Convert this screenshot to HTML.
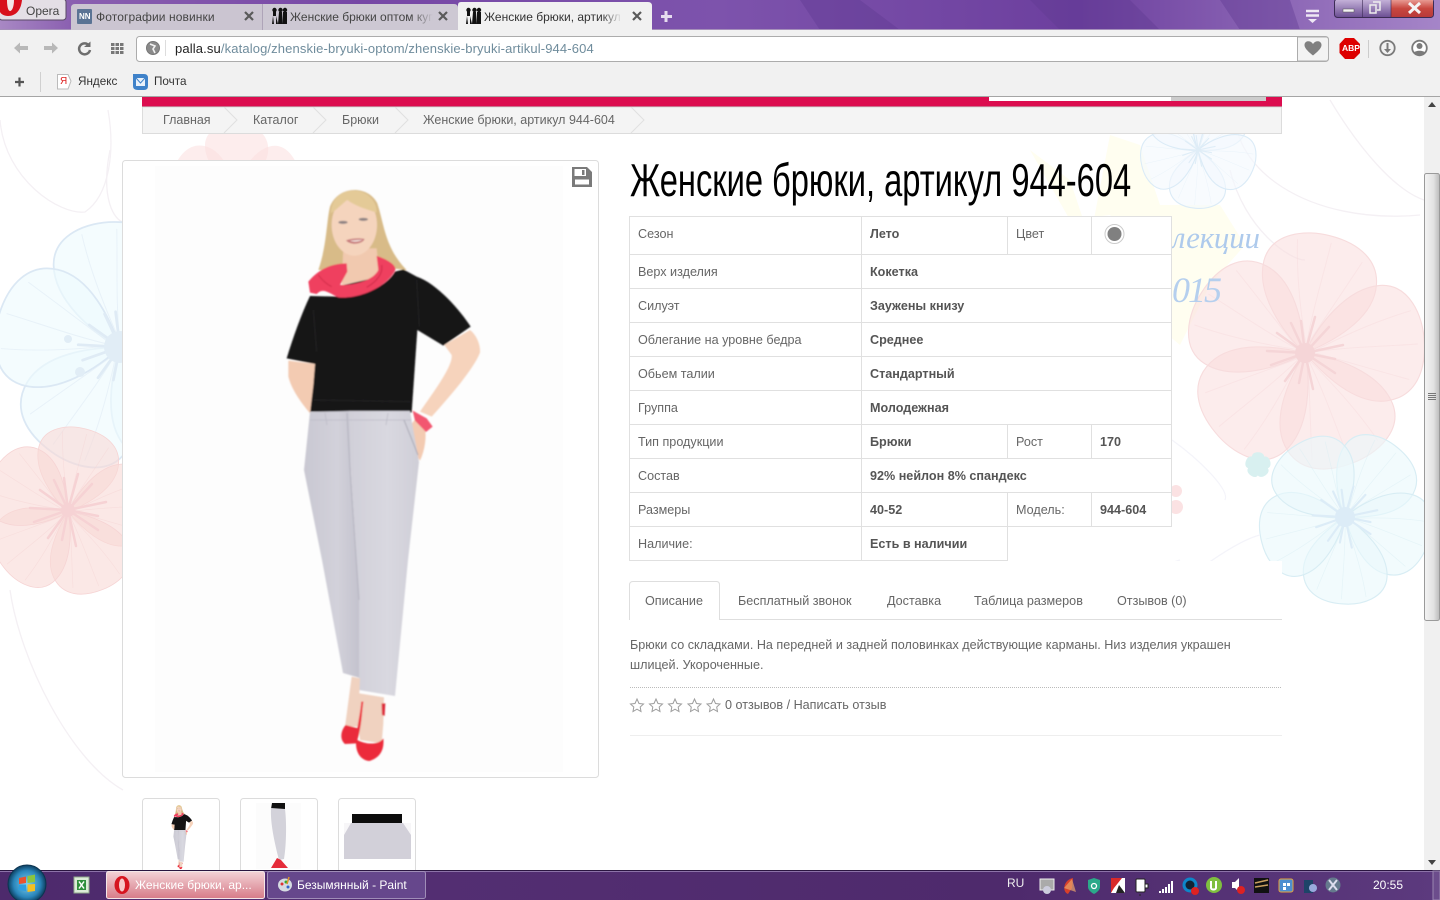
<!DOCTYPE html>
<html lang="ru"><head><meta charset="utf-8"><title>Женские брюки, артикул 944-604</title>
<style>
html,body{margin:0;padding:0;width:1440px;height:900px;overflow:hidden;background:#fff;font-family:"Liberation Sans","Noto Sans CJK SC",sans-serif;}
.t{position:absolute;white-space:nowrap;line-height:16px;font-size:12.6px;color:#666}
.b{font-weight:bold;color:#555;font-size:12.6px}
svg{position:absolute;left:0;top:0}
</style></head><body>
<svg width="1440" height="900" viewBox="0 0 1440 900">
<defs>
<filter id="soft" x="-5%" y="-5%" width="110%" height="110%"><feGaussianBlur stdDeviation=".7"/></filter>
<filter id="soft2" x="-20%" y="-20%" width="140%" height="140%"><feGaussianBlur stdDeviation="1.6"/></filter>
<g id="pt"><path d="M0,0 C-22,-14 -52,-44 -50,-74 C-48,-100 -18,-108 4,-106 C30,-104 52,-92 52,-66 C52,-38 22,-14 0,0Z"/>
<path d="M0,-6C-12,-40 -20,-70 -24,-98M0,-6C0,-40 4,-70 6,-100M0,-6C12,-34 24,-60 36,-88" fill="none" stroke-opacity=".5" stroke-width=".8"/></g>
<g id="fl">
<use href="#pt"/><use href="#pt" transform="rotate(72)"/><use href="#pt" transform="rotate(144)"/><use href="#pt" transform="rotate(216)"/><use href="#pt" transform="rotate(288)"/>
</g>
<g id="st" fill="none" stroke-width="2.5" stroke-linecap="round"><path d="M0,0L-4,-32M0,0L10,-36M0,0L24,-26M0,0L38,-8M0,0L30,6M0,0L30,20M0,0L8,36M0,0L-6,30M0,0L-20,28M0,0L-34,12M0,0L-38,-2M0,0L-28,-20M0,0L-14,-30"/></g>
<linearGradient id="pL" x1="0" x2="1"><stop offset="0" stop-color="#c9c8d2"/><stop offset=".6" stop-color="#d2d1da"/><stop offset="1" stop-color="#c3c2cd"/></linearGradient>
<linearGradient id="pR" x1="0" x2="1"><stop offset="0" stop-color="#d0cfd8"/><stop offset=".55" stop-color="#d9d8e0"/><stop offset="1" stop-color="#cfced7"/></linearGradient>
<g id="person">
<g transform="translate(260,170) scale(.33333)">
<path d="M175,300C200,230 200,150 210,110C235,45 325,45 352,100C372,160 375,235 440,300L350,290L230,300Z" fill="#d8bb88"/>
<path d="M250,235L350,235L358,322L245,345Z" fill="#f1c9af"/>
<ellipse cx="283" cy="165" rx="68" ry="92" fill="#f5d4bd"/>
<path d="M212,130C232,118 250,98 262,90C285,108 320,118 350,128C352,95 322,62 282,62C240,62 214,90 212,130Z" fill="#e4ca97"/>
<ellipse cx="249" cy="157" rx="14" ry="4.500" fill="#8d8283"/><ellipse cx="310" cy="148" rx="14" ry="4.500" fill="#8d8283"/>
<path d="M258,211C275,204 300,204 314,207C306,224 270,226 258,211Z" fill="#c87a7c"/>
<path d="M270,212C285,210 298,210 308,209C298,216 280,217 270,212Z" fill="#f2e6e0"/>
<path d="M150,378C125,430 100,500 80,565L165,582L168,545L150,725L455,728L472,480L550,527L632,470C600,420 530,340 470,320L430,298L405,305C380,350 300,385 235,380Z" fill="#141314"/>
<path d="M160,690L452,695M470,330L478,470M160,420L170,545" stroke="#2a2a2c" stroke-width="2" fill="none"/>
<path d="M85,572L165,582L160,645L150,730C125,700 95,660 85,620Z" fill="#f3cbb2"/>
<path d="M553,525L630,480C650,495 662,525 660,548C640,600 560,690 515,740L480,725C510,680 580,590 575,555Z" fill="#f6d3bc"/>
<path d="M465,748L430,795L440,810L480,872C495,840 500,800 495,775Z" fill="#f3cbb2"/>
<path d="M250,345L352,322L340,345L255,352Z" fill="#141314"/>
<path d="M145,335C170,305 205,280 260,280L262,305L240,345C290,345 340,330 355,300L350,258C390,270 412,290 405,302C380,350 300,388 235,382C210,372 190,350 170,372L150,368Z" fill="#ef3f5e"/>
<path d="M175,315C190,335 205,345 215,350M365,285C370,310 350,335 320,352" stroke="#cf2b4a" stroke-width="3" fill="none"/>
<path d="M458,722L500,745L518,770L498,786L465,752Z" fill="#f2566f"/>
</g>
<path d="M310,412L350,411L351,470L359,600L360,678L343,673L322,560L304,470Z" fill="url(#pL)"/>
<path d="M349,411L410,411L419,462L408,560L395,696L359,690L359,600L351,470Z" fill="url(#pR)"/>
<path d="M347,413L350,470L359,600" fill="none" stroke="#b4b3bf" stroke-width="1"/>
<path d="M325,413L327,425M388,413L386,425M310,420H411" fill="none" stroke="#bcbbc6" stroke-width=".8"/>
<path d="M404,420L418,455" fill="none" stroke="#a9a8b4" stroke-width="1"/>
<g transform="translate(280,460) scale(.33333)">
<path d="M215,650L240,655L238,700L312,712L310,790L305,850L240,840L235,800L195,800Z" fill="#f0d2c0"/>
<path d="M305,730L316,730L314,768L306,765Z" fill="#dd2c3a"/>
<path d="M197,795L235,805L230,850L195,852C180,840 180,815 197,795Z" fill="#ea2b3a"/>
<path d="M232,840C245,800 245,760 250,725L244,725C240,770 230,800 228,850C228,875 240,900 268,903C295,895 314,875 310,835C295,855 260,855 232,840Z" fill="#ec2c3a"/>
</g>
</g>
<linearGradient id="tp" x1="0" x2="1" y1="0" y2="0"><stop offset="0" stop-color="#a888c4"/><stop offset=".05" stop-color="#8a5fb0"/><stop offset=".25" stop-color="#7647a5"/><stop offset=".5" stop-color="#7d53ac"/><stop offset=".75" stop-color="#6c3f9e"/><stop offset="1" stop-color="#a585c8"/></linearGradient>
<linearGradient id="sb" x1="0" x2="1"><stop offset="0" stop-color="#f4f4f4"/><stop offset=".6" stop-color="#e2e2e2"/><stop offset="1" stop-color="#bbb"/></linearGradient>
<linearGradient id="tb" x1="0" x2="1"><stop offset="0" stop-color="#4d2a6c"/><stop offset=".3" stop-color="#532e72"/><stop offset=".7" stop-color="#4e2a6c"/><stop offset="1" stop-color="#5c3a7e"/></linearGradient>
<linearGradient id="rb" x1="0" y1="0" y2="1" x2="0"><stop offset="0" stop-color="#f3d2d6"/><stop offset="1" stop-color="#d77b88"/></linearGradient>
<linearGradient id="wc" x1="0" y1="0" y2="1" x2="0"><stop offset="0" stop-color="#e89a92"/><stop offset=".5" stop-color="#c8473f"/><stop offset="1" stop-color="#b83a3a"/></linearGradient>
<linearGradient id="wb" x1="0" y1="0" y2="1" x2="0"><stop offset="0" stop-color="#c9b7dc"/><stop offset="1" stop-color="#6a4c92"/></linearGradient>
<radialGradient id="orb"><stop offset="0" stop-color="#7fd0ef"/><stop offset=".7" stop-color="#2a86bb"/><stop offset="1" stop-color="#0d3f60"/></radialGradient>
</defs>

<!-- page background flowers -->
<rect y="97" width="1424" height="773" fill="#fff"/>
<g fill="none" stroke="#f4f0f4" stroke-width="1.3">
<path d="M1235,98C1225,170 1310,225 1420,215"/><path d="M1230,170C1245,230 1290,260 1305,260"/><path d="M1330,100C1360,150 1395,190 1424,200"/>
<path d="M0,120C5,180 60,215 85,212C110,195 115,150 108,110"/><path d="M110,150C100,200 115,220 123,222"/>
<path d="M10,590C20,660 70,760 123,790"/>
</g>
<path d="M1030,150L1070,180L1090,240L1110,135L1140,145L1160,205L1220,205L1245,245L1210,285L1180,345L1150,320L1140,255L1110,215L1070,220Z" fill="#fffef0"/>
<g transform="translate(236,190) scale(.62)" fill="#fbdede" fill-opacity=".55"><use href="#fl"/></g>
<g transform="translate(120,347) scale(1.18) rotate(-5)" fill="#eefbfd" fill-opacity=".65" stroke="#dbe8f4" stroke-width="1.5"><use href="#fl"/></g>
<g transform="translate(120,347) scale(1.1)" stroke="#dfebf5"><use href="#st" stroke-width="4"/></g>
<circle cx="120" cy="347" r="16" fill="#e1edf6"/><circle cx="80" cy="372" r="5" fill="#e1edf6"/><circle cx="68" cy="339" r="4" fill="#e1edf6"/>
<g transform="translate(68,512) scale(.8) rotate(10)" fill="#f9d8d6" fill-opacity=".6" stroke="#f6d4d4" stroke-width="1"><use href="#fl"/></g>
<g transform="translate(68,510)" stroke="#f6d2d4"><use href="#st" stroke-width="2.2"/></g>
<circle cx="68" cy="510" r="7" fill="#f6d2d4"/>
<g transform="translate(1305,353) scale(1.13) rotate(10)" fill="#f9dcdc" fill-opacity=".55" stroke="#f7dcdd" stroke-width="1"><use href="#fl"/></g>
<g transform="translate(1305,353)" stroke="#f5d5d7"><use href="#st" stroke-width="2.5"/></g>
<circle cx="1305" cy="353" r="10" fill="#f5d5d7"/>
<g transform="translate(1345,517) scale(.82) rotate(35)" fill="#eaf8fb" fill-opacity=".6" stroke="#d8edf4" stroke-width="1.4"><use href="#fl"/></g>
<g transform="translate(1345,517) scale(.85)" stroke="#dcecf7"><use href="#st" stroke-width="3"/></g>
<circle cx="1345" cy="517" r="10" fill="#dcecf7"/>
<g transform="translate(1198,150) scale(.55) rotate(180)" fill="#f3f9fd" fill-opacity=".6" stroke="#dbebf7" stroke-width="2"><use href="#fl"/></g>
<g transform="translate(1198,150) scale(.45)" stroke="#dfedf7"><use href="#st" stroke-width="4"/></g>
<g transform="translate(1258,465) scale(.12)" fill="#d8f0f0"><use href="#fl"/></g>
<circle cx="1176" cy="491" r="6" fill="#fbe2e3"/><circle cx="1176" cy="507" r="7" fill="#fbe2e3"/>
<g fill="none" stroke="#f4f4fa" stroke-width="1.2"><path d="M1172,440C1200,460 1230,490 1225,500"/><path d="M1172,590C1210,560 1240,540 1260,535"/><path d="M1090,600C1120,570 1150,570 1180,560"/></g>
<text x="1172" y="248" font-family="Liberation Serif" font-style="italic" font-size="31" fill="#aecaec" textLength="88">лекции</text>
<text x="1172" y="302" font-family="Liberation Serif" font-style="italic" font-size="36" fill="#b5cfee" textLength="50">015</text>

<!-- white content blocks -->
<rect x="630" y="216" width="542" height="345" fill="#fff"/>
<rect x="630" y="561" width="652" height="309" fill="#fff"/>

<!-- product image box -->
<rect x="122.500" y="160.500" width="476" height="617" rx="3" fill="#fff" stroke="#dcdcdc"/>
<rect x="155" y="166" width="408" height="606" fill="#fdfdfd"/>
<g filter="url(#soft)"><use href="#person"/></g>
<path d="M572,167H587L592,172V187H572ZM574.500,169V176H586V169ZM582,170H584.500V175H582ZM575,179.500V184.500H589V179.500Z" fill-rule="evenodd" fill="#7a7a7a"/>

<!-- thumbnails -->
<rect x="142.500" y="798.500" width="77" height="90" rx="3" fill="#fff" stroke="#dcdcdc"/>
<rect x="240.500" y="798.500" width="77" height="90" rx="3" fill="#fff" stroke="#dcdcdc"/>
<rect x="338.500" y="798.500" width="77" height="90" rx="3" fill="#fff" stroke="#dcdcdc"/>
<g transform="translate(181,805) scale(.112) translate(-372,-188)"><use href="#person"/></g>
<rect x="256" y="803" width="45" height="66" fill="#fcfcfc"/>
<path d="M272,803H285L285,809L271,809Z" fill="#111"/>
<path d="M271,808L285,809C287,825 286,848 284,859L279,860C276,848 270,825 271,808Z" fill="#d3d2da"/>
<path d="M277,858L281,860L288,868L271,868Z" fill="#e52c3a"/>
<rect x="344" y="823" width="67" height="36" fill="#d2d0d9"/>
<path d="M344,823H351L344,835ZM411,823H403L411,835Z" fill="#f7f6f8"/>
<rect x="352" y="814" width="50" height="9" fill="#0c0c0c"/>

<!-- scrollbar -->
<rect x="1424" y="97" width="16" height="773" fill="#f0f0f0"/>
<rect x="1424.500" y="173.500" width="15" height="447" rx="2" fill="url(#sb)" stroke="#9a9a9a"/>
<path d="M1428,393.500h8M1428,395.500h8M1428,397.500h8M1428,399.500h8" stroke="#777"/>
<path d="M1432,102L1428,107H1436Z" fill="#444"/><path d="M1432,865L1428,860H1436Z" fill="#444"/>

<!-- pink band + breadcrumb -->
<rect x="142" y="97" width="1140" height="10" fill="#dc0d4f"/>
<rect x="142" y="106" width="1140" height="1" fill="#b80b42"/>
<rect x="989" y="97" width="182" height="4" fill="#fff"/>
<rect x="1171" y="97" width="95" height="4" fill="#ccc"/>
<rect x="142.500" y="107" width="1139" height="26.500" fill="#f4f4f4" stroke="#dcdcdc"/>
<g fill="none" stroke="#e0e0e0"><path d="M224,107L237,120L224,133"/><path d="M313,107L326,120L313,133"/><path d="M395,107L408,120L395,133"/><path d="M631,107L644,120L631,133"/></g>

<!-- table lines -->
<g stroke="#e0e0e0" fill="none">
<path d="M629.500,216.500H1171.500V526.500H1007.500V560.500H629.500Z"/>
<path d="M630,254.500H1172M630,288.500H1172M630,322.500H1172M630,356.500H1172M630,390.500H1172M630,424.500H1172M630,458.500H1172M630,492.500H1172M630,526.500H1008"/>
<path d="M861.500,216V561M1007.500,216V255M1091.500,216V255M1007.500,425V459M1091.500,425V459M1007.500,493V527M1091.500,493V527"/>
</g>
<circle cx="1114.500" cy="234" r="9.500" fill="#fff" stroke="#ccc"/><circle cx="1114.500" cy="234" r="7" fill="#808080"/>

<!-- tabs -->
<path d="M629.500,620V585Q629.500,581.500 633,581.500H716.500Q719.500,581.500 719.500,585V619.500H1282" fill="none" stroke="#dedede"/>
<path d="M630,687.500H1282" stroke="#bbb" stroke-dasharray="1 1"/>
<path d="M630,735.500H1282" stroke="#eee"/>
<g fill="#fff" stroke="#9d9d9d" stroke-width="1"><path id="s1" d="M637,699L639,703.500L643.500,704L640.200,707L641,711.500L637,709.200L633,711.500L633.800,707L630.500,704L635,703.500Z"/>
<use href="#s1" x="19"/><use href="#s1" x="38"/><use href="#s1" x="57.500"/><use href="#s1" x="76.500"/></g>

<!-- browser chrome -->
<rect width="1440" height="30" fill="url(#tp)"/>
<g fill="#5f3a92" opacity=".4"><path d="M800,0H860L900,30H820ZM1030,0H1130L1160,30H1060ZM1220,0H1290L1300,30H1240Z"/></g>
<rect x="0" y="29" width="1440" height="68" fill="#f1f1f1"/>
<rect x="0" y="29" width="1440" height="1" fill="#a58fba"/>
<rect x="0" y="96" width="1440" height="1" fill="#a5a5a5"/>
<rect x="-1" y="-1" width="67" height="21" rx="3" fill="#e4dfe6" stroke="#5a4a66"/>
<path d="M0,0H22C21,10 16,16 8,16C4,16 1,14 0,12Z" fill="#d8101c"/><path d="M7,0H14C14,7 12,11 10,11C8,11 7,6 7,0Z" fill="#f3e6e6"/>
<path d="M71,30V8Q71,4 75,4H262V30Z" fill="#cbc5d1"/>
<path d="M262,30V4H454Q458,4 458,8V30Z" fill="#cdc8d3"/>
<path d="M262.500,4V30" stroke="#aea4b8"/>
<path d="M458,30V5Q458,2 461,2H648Q652,2 652,6V30Z" fill="#f1f1f1"/>
<rect x="77" y="9" width="15" height="15" rx="1" fill="#5a7394"/>
<g fill="#111"><path d="M273,10h3v6h-3zM276,16l2,8h-2zM273,16l-1,8h2z"/><circle cx="274.500" cy="10" r="2.200"/><circle cx="280.500" cy="10" r="2.200"/><path d="M279,12h3l1,12h-5z"/><circle cx="285" cy="10" r="2.200"/><path d="M283,12h4v12h-4z"/></g>
<g fill="#111" transform="translate(194,0)"><path d="M273,10h3v6h-3zM276,16l2,8h-2zM273,16l-1,8h2z"/><circle cx="274.500" cy="10" r="2.200"/><circle cx="280.500" cy="10" r="2.200"/><path d="M279,12h3l1,12h-5z"/><circle cx="285" cy="10" r="2.200"/><path d="M283,12h4v12h-4z"/></g>
<g stroke="#5a5a5a" stroke-width="2.200"><path d="M245,12L253,20M253,12L245,20M439,12L447,20M447,12L439,20M633,12L641,20M641,12L633,20"/></g>
<path d="M666,11V22M661,16.500H672" stroke="#e6dcef" stroke-width="3"/>
<path d="M1306,11H1319M1306,15.500H1319" stroke="#efe8f5" stroke-width="2.500"/><path d="M1308,19H1317L1312.500,23Z" fill="#efe8f5"/>
<rect x="1334.500" y="-1" width="99" height="18.500" rx="3" fill="url(#wb)" stroke="#3c2c55"/>
<path d="M1391,0H1433V14Q1433,17 1430,17H1391Z" fill="url(#wc)"/>
<path d="M1362.500,0V17M1391,0V17" stroke="#3c2c55" stroke-opacity=".6"/>
<rect x="1343" y="9" width="11" height="3" fill="#f4f4f4" stroke="#555" stroke-width=".5"/>
<path d="M1370,5h6v8h-6zM1373,2h7v8h-3" fill="none" stroke="#eee" stroke-width="1.500"/>
<path d="M1409,3L1420,13M1420,3L1409,13" stroke="#f4f4f4" stroke-width="3"/>

<!-- toolbar icons -->
<g fill="#b8b8b8"><path d="M14,48L20,42.500V46H28V50H20V53.500Z"/><path d="M58,48L52,42.500V46H44V50H52V53.500Z"/></g>
<path d="M89,45.500A5.500,5.500 0 1 0 90,50" fill="none" stroke="#6e6e6e" stroke-width="2.500"/><path d="M85,44H91.500V38.500Z" fill="#6e6e6e" transform="translate(-1,3)"/>
<g fill="#777"><rect x="111" y="43" width="3.500" height="3"/><rect x="115.500" y="43" width="3.500" height="3"/><rect x="120" y="43" width="3.500" height="3"/><rect x="111" y="47" width="3.500" height="3"/><rect x="115.500" y="47" width="3.500" height="3"/><rect x="120" y="47" width="3.500" height="3"/><rect x="111" y="51" width="3.500" height="3"/><rect x="115.500" y="51" width="3.500" height="3"/><rect x="120" y="51" width="3.500" height="3"/></g>
<rect x="136.500" y="36.500" width="1192" height="25" rx="3" fill="#fff" stroke="#acacac"/>
<path d="M1297.500,37V61H1326Q1328.500,61 1328.500,58V40Q1328.500,37 1326,37Z" fill="#f3f3f3" stroke="#acacac"/>
<path d="M1313,55.500C1306,50 1304.500,47 1304.500,45C1304.500,40.500 1310.500,40 1313,44C1315.500,40 1321.500,40.500 1321.500,45C1321.500,47 1320,50 1313,55.500Z" fill="#808080"/>
<circle cx="153" cy="48" r="6.500" fill="#8a8a8a" stroke="#777"/><path d="M150,44L155,46L153,49L155,53" stroke="#f1f1f1" stroke-width="1.600" fill="none"/>
<path d="M165.500,40V56" stroke="#ddd"/>
<path d="M1345,38H1354L1360,44V53L1354,59H1345L1339.500,53V44Z" fill="#d00"/>
<path d="M1368.500,40V58" stroke="#ccc"/>
<circle cx="1387.500" cy="48" r="7.200" fill="none" stroke="#7a7a7a" stroke-width="1.800"/><path d="M1387.500,43V50" stroke="#7a7a7a" stroke-width="2"/><path d="M1384,49H1391L1387.500,53Z" fill="#7a7a7a"/>
<circle cx="1419.500" cy="48" r="7.300" fill="#fff" stroke="#7a7a7a" stroke-width="1.800"/><circle cx="1419.500" cy="46" r="3" fill="#7a7a7a"/><path d="M1413.500,53C1415,50 1424,50 1425.500,53C1423,56 1416,56 1413.500,53Z" fill="#7a7a7a"/>
<path d="M15,82H24M19.500,77.500V86.500" stroke="#555" stroke-width="2.200"/>
<path d="M40.500,72V92" stroke="#d0d0d0"/>
<path d="M57.500,74.500H68L71,81L68,89H57.500Z" fill="#fff" stroke="#bbb"/>
<path d="M133,74H144Q148,74 148,78V86Q148,90 144,90H138Q133,90 133,86Z" fill="#3f82c9"/><path d="M136,78H145V86H136Z" fill="#e9f1fa"/><path d="M136,78L140.500,83L145,78" fill="none" stroke="#3f82c9"/>

<!-- taskbar -->
<rect y="870" width="1440" height="30" fill="url(#tb)"/>
<rect y="870" width="1440" height="1" fill="#2a1540"/><rect y="871" width="1440" height="1" fill="#8c72a8"/>
<circle cx="27" cy="884" r="19" fill="url(#orb)" stroke="#0c3450"/>
<path d="M19,878L26,876.500V883L19,884Z" fill="#e8522f"/><path d="M27.500,876L35,874.500V882L27.500,883Z" fill="#8bc53f"/><path d="M19,885L26,884.500V891L18,890Z" fill="#2d9fe0"/><path d="M27.500,884.500L35,884V891L27.500,892Z" fill="#f5c022"/>
<rect x="74" y="877" width="15" height="16" fill="#dcecd8" stroke="#8fa88a"/><rect x="77" y="880" width="9" height="10" fill="#2f8f3c"/><path d="M79,881.500L84,888.500M84,881.500L79,888.500" stroke="#fff" stroke-width="1.500"/>
<rect x="106.500" y="871.500" width="158" height="27" rx="2" fill="url(#rb)" stroke="#f4e6e8"/>
<rect x="267.500" y="871.500" width="158" height="27" rx="2" fill="#66478c" stroke="#a08db8"/>
<ellipse cx="122" cy="885" rx="7.500" ry="9" fill="#d6141f"/><ellipse cx="122" cy="885" rx="3" ry="6.500" fill="#f6c8c8"/>
<ellipse cx="285" cy="885" rx="7" ry="6.500" fill="#d6dbe2"/><circle cx="282" cy="884" r="1.500" fill="#d33"/><circle cx="286" cy="882" r="1.500" fill="#3a3"/><circle cx="288" cy="887" r="1.500" fill="#36c"/><path d="M289,877L287,884" stroke="#d9962b" stroke-width="1.500"/>
<!-- tray -->
<rect x="1040" y="879" width="14" height="11" fill="#aaa" stroke="#eee"/><circle cx="1047" cy="890" r="4" fill="#ccd"/>
<path d="M1073,878C1063,880 1062,892 1068,894L1072,888Z" fill="#d8402a"/><path d="M1064,888L1076,892L1072,879Z" fill="#e9a46b" opacity=".7"/>
<path d="M1088,880L1094,878L1100,880V887C1100,891 1094,894 1094,894C1094,894 1088,891 1088,887Z" fill="#2ba98a"/><circle cx="1094" cy="886" r="2.500" fill="none" stroke="#fff" stroke-width="1.300"/>
<rect x="1111" y="878" width="14" height="15" fill="#fff"/><path d="M1111,893L1111,878L1122,878L1114,888Z" fill="#d82a2a"/><path d="M1119,885L1125,893H1116Z" fill="#222"/>
<rect x="1136" y="879" width="9" height="13" rx="1" fill="#fff" stroke="#222"/><path d="M1145,884h3v4h-3zM1140,894v2" stroke="#222" fill="#fff"/>
<path d="M1159,891h2v2h-2zM1162,889h2v4h-2zM1165,887h2v6h-2zM1168,884h2v9h-2zM1171,881h2v12h-2z" fill="#fff"/>
<circle cx="1190" cy="885" r="7.500" fill="#0e86c9"/><circle cx="1190" cy="885" r="4.500" fill="#123"/><circle cx="1195" cy="891" r="4" fill="#d22"/>
<circle cx="1214" cy="885" r="8" fill="#7fbf3f"/><path d="M1211,881V888C1211,890 1216,890 1216,888V881" fill="none" stroke="#fff" stroke-width="2"/>
<path d="M1232,882h3l4,-4v14l-4,-4h-3z" fill="#fff"/><circle cx="1241" cy="890" r="4" fill="#d22"/>
<rect x="1254" y="878" width="15" height="15" fill="#111"/><path d="M1255,883L1268,880M1255,887L1268,885" stroke="#caa060" stroke-width="1.500"/>
<rect x="1279" y="879" width="14" height="13" rx="2" fill="#4d8ed0" stroke="#e8a33a"/><path d="M1283,883h3v3h-3zM1287,883h3v3h-3zM1283,887h3v3h-3z" fill="#fff"/>
<rect x="1304" y="880" width="9" height="13" fill="#1d4468"/><circle cx="1313" cy="888" r="4" fill="#9ad"/>
<circle cx="1333" cy="885" r="7.500" fill="#65798d"/><path d="M1329,880L1337,890M1337,880L1329,890" stroke="#dde" stroke-width="2"/>
<rect x="1433" y="871" width="7" height="29" fill="#6c4d8c" stroke="#9a86b0"/>
</svg>

<!-- tab bar text -->
<div class="t" style="left:26px;top:3px;font-size:12px;color:#444">Opera</div>
<div class="t" style="left:79px;top:9px;font-size:8px;font-weight:bold;color:#fff">NN</div>
<div class="t" style="left:96px;top:9px;font-size:12px;color:#444;letter-spacing:.1px">Фотографии новинки</div>
<div class="t" style="left:290px;top:9px;font-size:12px;color:#444;width:143px;overflow:hidden;-webkit-mask-image:linear-gradient(90deg,#000 85%,transparent)">Женские брюки оптом купить</div>
<div class="t" style="left:484px;top:9px;font-size:12px;color:#333;width:138px;overflow:hidden;-webkit-mask-image:linear-gradient(90deg,#000 85%,transparent)">Женские брюки, артикул 944-604</div>
<div class="t" style="left:175px;top:41px;font-size:13px;color:#6f8c9c;letter-spacing:.13px"><span style="color:#222">palla.su</span>/katalog/zhenskie-bryuki-optom/zhenskie-bryuki-artikul-944-604</div>
<div class="t" style="left:1342px;top:40px;font-size:8.500px;font-weight:bold;color:#fff">ABP</div>
<div class="t" style="left:60px;top:74px;font-size:10px;color:#d22">Я</div>
<div class="t" style="left:78px;top:74px;font-size:11.700px;color:#333">Яндекс</div>
<div class="t" style="left:154px;top:74px;font-size:11.700px;color:#333">Почта</div>

<!-- breadcrumb -->
<div class="t" style="left:163px;top:112px;font-size:12.500px">Главная</div>
<div class="t" style="left:253px;top:112px;font-size:12.500px">Каталог</div>
<div class="t" style="left:342px;top:112px;font-size:12.500px">Брюки</div>
<div class="t" style="left:423px;top:112px;font-size:12.500px">Женские брюки, артикул 944-604</div>

<!-- title -->
<div class="t" style="left:630px;top:155px;font-size:46px;line-height:50px;color:#000;transform:scaleX(.71);transform-origin:0 0">Женские брюки, артикул 944-604</div>

<!-- table text -->
<div class="t" style="left:638px;top:226px">Сезон</div><div class="t b" style="left:870px;top:226px">Лето</div><div class="t" style="left:1016px;top:226px">Цвет</div>
<div class="t" style="left:638px;top:264px">Верх изделия</div><div class="t b" style="left:870px;top:264px">Кокетка</div>
<div class="t" style="left:638px;top:298px">Силуэт</div><div class="t b" style="left:870px;top:298px">Заужены книзу</div>
<div class="t" style="left:638px;top:332px">Облегание на уровне бедра</div><div class="t b" style="left:870px;top:332px">Среднее</div>
<div class="t" style="left:638px;top:366px">Обьем талии</div><div class="t b" style="left:870px;top:366px">Стандартный</div>
<div class="t" style="left:638px;top:400px">Группа</div><div class="t b" style="left:870px;top:400px">Молодежная</div>
<div class="t" style="left:638px;top:434px">Тип продукции</div><div class="t b" style="left:870px;top:434px">Брюки</div><div class="t" style="left:1016px;top:434px">Рост</div><div class="t b" style="left:1100px;top:434px">170</div>
<div class="t" style="left:638px;top:468px">Состав</div><div class="t b" style="left:870px;top:468px">92% нейлон 8% спандекс</div>
<div class="t" style="left:638px;top:502px">Размеры</div><div class="t b" style="left:870px;top:502px">40-52</div><div class="t" style="left:1016px;top:502px">Модель:</div><div class="t b" style="left:1100px;top:502px">944-604</div>
<div class="t" style="left:638px;top:536px">Наличие:</div><div class="t b" style="left:870px;top:536px">Есть в наличии</div>

<!-- tabs text -->
<div class="t" style="left:645px;top:593px">Описание</div>
<div class="t" style="left:738px;top:593px">Бесплатный звонок</div>
<div class="t" style="left:887px;top:593px">Доставка</div>
<div class="t" style="left:974px;top:593px">Таблица размеров</div>
<div class="t" style="left:1117px;top:593px">Отзывов (0)</div>
<div class="t" style="left:630px;top:637px">Брюки со складками. На передней и задней половинках действующие карманы. Низ изделия украшен</div>
<div class="t" style="left:630px;top:657px">шлицей. Укороченные.</div>
<div class="t" style="left:725px;top:697px">0 отзывов / Написать отзыв</div>

<!-- taskbar text -->
<div class="t" style="left:135px;top:877px;font-size:12px;color:#fff">Женские брюки, ар...</div>
<div class="t" style="left:297px;top:877px;font-size:12px;color:#fff">Безымянный - Paint</div>
<div class="t" style="left:1007px;top:875px;font-size:12px;color:#eee">RU</div>
<div class="t" style="left:1373px;top:877px;font-size:12px;color:#fff">20:55</div>
</body></html>
